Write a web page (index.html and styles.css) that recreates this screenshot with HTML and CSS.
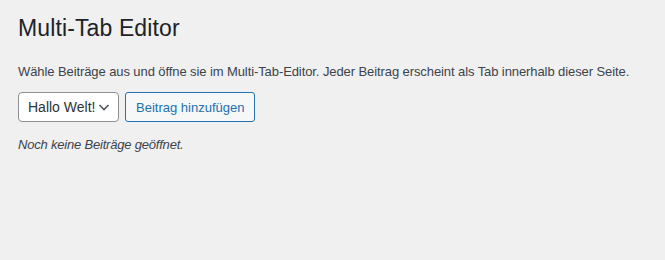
FILE: index.html
```html
<!DOCTYPE html>
<html lang="de">
<head>
<meta charset="utf-8">
<title>Multi-Tab Editor</title>
<link rel="stylesheet" href="styles.css">
</head>
<body>
<div class="wrap">
  <h1 class="title">Multi-Tab Editor</h1>
  <p class="intro">Wähle Beiträge aus und öffne sie im Multi-Tab-Editor. Jeder Beitrag erscheint als Tab innerhalb dieser Seite.</p>
  <div class="controls">
    <div class="select">
      <span class="select-label">Hallo Welt!</span>
      <svg class="chevron" width="16" height="16" viewBox="0 0 16 16" aria-hidden="true"><path d="M3.5 6 L8 10.5 L12.5 6" fill="none" stroke="#50575e" stroke-width="1.6"/></svg>
    </div>
    <button class="button" type="button">Beitrag hinzufügen</button>
  </div>
  <p class="empty">Noch keine Beiträge geöffnet.</p>
</div>
</body>
</html>
```

FILE: styles.css
```css
html, body {
  margin: 0;
  padding: 0;
  background: #f0f0f1;
  color: #1d2327;
  font-family: "Liberation Sans", Arial, sans-serif;
}
.wrap {
  padding: 0 18px;
}
.title {
  margin: 0;
  padding-top: 14px;
  font-size: 23px;
  font-weight: 400;
  line-height: 29px;
  letter-spacing: 0.12px;
  color: #1d2327;
}
.intro {
  margin: 0;
  padding-top: 19px;
  font-size: 13px;
  line-height: 19px;
  letter-spacing: -0.09px;
  color: #3c434a;
}
.controls {
  display: flex;
  gap: 6px;
  margin-top: 11px;
}
.select {
  box-sizing: border-box;
  height: 30px;
  width: 101px;
  display: flex;
  align-items: center;
  justify-content: space-between;
  padding: 0 6px 0 9px;
  background: #fff;
  border: 1px solid #8c8f94;
  border-radius: 4px;
  font-size: 14px;
  color: #2c3338;
}
.chevron {
  display: block;
}
.button {
  box-sizing: border-box;
  height: 30px;
  padding: 0 10px;
  background: #f6f7f7;
  border: 1px solid #2271b1;
  border-radius: 3px;
  color: #2271b1;
  font-family: inherit;
  font-size: 13px;
}
.empty {
  margin: 0;
  padding-top: 13px;
  font-size: 13px;
  line-height: 19px;
  letter-spacing: -0.2px;
  font-style: italic;
  color: #3c434a;
}
```
